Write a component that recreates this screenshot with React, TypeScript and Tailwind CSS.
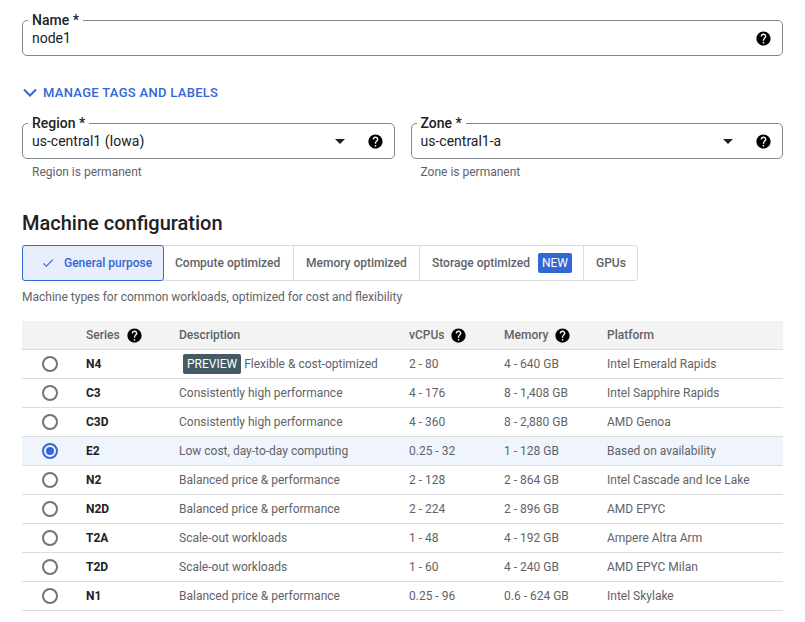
import React from 'react';

const font = "font-['Roboto',sans-serif]";

function HelpIcon({ className = '' }: { className?: string }) {
  return (
    <svg viewBox="0 0 24 24" className={`w-[17px] h-[17px] shrink-0 fill-black ${className}`}>
      <path d="M12 2C6.48 2 2 6.48 2 12s4.48 10 10 10 10-4.48 10-10S17.52 2 12 2zm1 17h-2v-2h2v2zm2.07-7.75l-.9.92C13.45 12.9 13 13.5 13 15h-2v-.5c0-1.1.45-2.1 1.17-2.83l1.24-1.26c.37-.36.59-.86.59-1.41 0-1.1-.9-2-2-2s-2 .9-2 2H8c0-2.21 1.79-4 4-4s4 1.79 4 4c0 .88-.36 1.68-.93 2.25z" />
    </svg>
  );
}

function Field({ label, value, select }: { label: string; value: string; select?: boolean }) {
  return (
    <div className="relative h-[36px] rounded-[5px] border border-[#80868b] pl-[9px] pr-[10px] flex items-center pt-[1px]">
      <span className="absolute -top-[9px] left-[5px] bg-white px-[4px] text-[14px] leading-[17px] font-medium text-[#202124]">
        {label}
      </span>
      <span className="flex-1 text-[14px] text-[#202124]">{value}</span>
      {select && <span className="mr-[22px] w-0 h-0 border-x-[5px] border-x-transparent border-t-[5px] border-t-[#202124]"></span>}
      <HelpIcon />
    </div>
  );
}

const tabs = ['Compute optimized', 'Memory optimized'];

const rows = [
  ['N4', 'Flexible & cost-optimized', '2 - 80', '4 - 640 GB', 'Intel Emerald Rapids'],
  ['C3', 'Consistently high performance', '4 - 176', '8 - 1,408 GB', 'Intel Sapphire Rapids'],
  ['C3D', 'Consistently high performance', '4 - 360', '8 - 2,880 GB', 'AMD Genoa'],
  ['E2', 'Low cost, day-to-day computing', '0.25 - 32', '1 - 128 GB', 'Based on availability'],
  ['N2', 'Balanced price & performance', '2 - 128', '2 - 864 GB', 'Intel Cascade and Ice Lake'],
  ['N2D', 'Balanced price & performance', '2 - 224', '2 - 896 GB', 'AMD EPYC'],
  ['T2A', 'Scale-out workloads', '1 - 48', '4 - 192 GB', 'Ampere Altra Arm'],
  ['T2D', 'Scale-out workloads', '1 - 60', '4 - 240 GB', 'AMD EPYC Milan'],
  ['N1', 'Balanced price & performance', '0.25 - 96', '0.6 - 624 GB', 'Intel Skylake'],
];

const cols = 'grid grid-cols-[64px_93px_230px_95px_103px_1fr] items-center';

export default function App() {
  return (
    <div className={`${font} w-[805px] h-[622px] overflow-hidden bg-white px-[22px] pt-[20px]`}>
      <Field label="Name *" value="node1" />

      <div className="mt-[28px] flex items-center gap-[5px] h-[18px] text-[#3367d6]">
        <svg viewBox="0 0 16 10" className="w-[16px] h-[10px] fill-none stroke-[#3367d6] stroke-2">
          <path d="M2 1.5l6 6 6-6" />
        </svg>
        <span className="text-[13px] font-medium tracking-[0.3px]">MANAGE TAGS AND LABELS</span>
      </div>

      <div className="mt-[21px] grid grid-cols-2 gap-x-[16px]">
        <div>
          <Field label="Region *" value="us-central1 (Iowa)" select />
          <p className="mt-[5px] pl-[10px] text-[12px] leading-[16px] text-[#5f6368]">Region is permanent</p>
        </div>
        <div>
          <Field label="Zone *" value="us-central1-a" select />
          <p className="mt-[5px] pl-[10px] text-[12px] leading-[16px] text-[#5f6368]">Zone is permanent</p>
        </div>
      </div>

      <h2 className="mt-[30px] text-[20px] leading-[26px] font-medium text-[#202124]">Machine configuration</h2>

      <div className="mt-[9px] flex h-[36px] w-[616px] rounded-[3px] border border-[#dadce0] text-[12px] font-medium text-[#5f6368]">
        <div className="-m-px w-[142px] flex items-center pl-[18px] gap-[9px] rounded-[3px] border border-[#3367d6] bg-[#e8eefb] text-[#3367d6]">
          <svg viewBox="0 0 24 24" className="w-[14px] h-[14px] fill-[#3367d6]">
            <path d="M9 16.2 4.8 12l-1.4 1.4L9 19 21 7l-1.4-1.4z" />
          </svg>
          General purpose
        </div>
        {tabs.map((t, i) => (
          <div key={t} className={`${i === 0 ? 'w-[130px] pl-[12px]' : 'w-[126px] pl-[12px] border-l border-[#dadce0]'} flex items-center`}>
            {t}
          </div>
        ))}
        <div className="w-[164px] flex items-center pl-[12px] gap-[8px] border-l border-[#dadce0]">
          Storage optimized
          <span className="h-[20px] px-[4px] flex items-center rounded-[2px] bg-[#3367d6] text-[12px] font-normal text-white">NEW</span>
        </div>
        <div className="flex-1 flex items-center pl-[12px] border-l border-[#dadce0]">GPUs</div>
      </div>

      <p className="mt-[8px] text-[12px] leading-[16px] text-[#5f6368]">Machine types for common workloads, optimized for cost and flexibility</p>

      <div className="mt-[16px] text-[12px] text-[#5f6368]">
        <div className={`${cols} h-[29px] bg-[#f3f3f3] border-b border-[#dadce0] font-medium`}>
          <span></span>
          <span className="flex items-center gap-[6px]">Series <HelpIcon /></span>
          <span>Description</span>
          <span className="flex items-center gap-[6px]">vCPUs <HelpIcon /></span>
          <span className="flex items-center gap-[6px]">Memory <HelpIcon /></span>
          <span>Platform</span>
        </div>
        {rows.map((r) => {
          const on = r[0] === 'E2';
          return (
            <div key={r[0]} className={`${cols} h-[29px] border-b border-[#dadce0] ${on ? 'bg-[#eff4fd]' : ''}`}>
              <span className="pl-[20px]">
                <span className={`flex items-center justify-center w-[16px] h-[16px] rounded-full border-2 ${on ? 'border-[#3367d6]' : 'border-[#70757a]'}`}>
                  {on && <span className="w-[8px] h-[8px] rounded-full bg-[#3367d6]"></span>}
                </span>
              </span>
              <span className="font-bold text-[#202124]">{r[0]}</span>
              {r[0] === 'N4' ? (
                <span className="flex items-center pl-[4px] gap-[3px]">
                  <span className="h-[20px] px-[4px] flex items-center rounded-[2px] bg-[#455a64] text-white">PREVIEW</span>
                  {r[1]}
                </span>
              ) : (
                <span>{r[1]}</span>
              )}
              <span>{r[2]}</span>
              <span>{r[3]}</span>
              <span>{r[4]}</span>
            </div>
          );
        })}
      </div>
    </div>
  );
}
